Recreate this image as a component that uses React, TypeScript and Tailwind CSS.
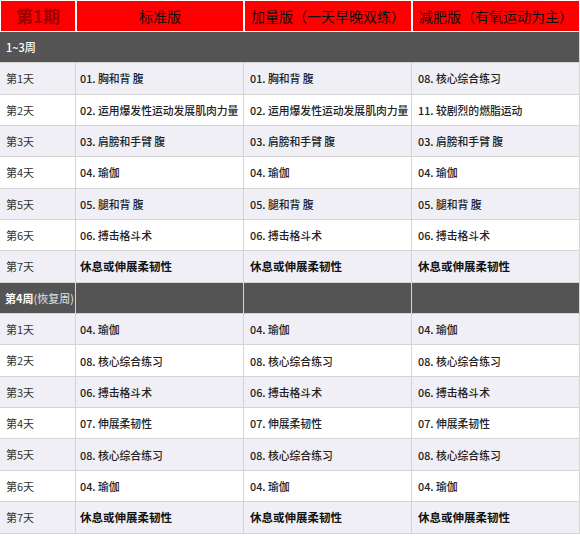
import React from "react";

const font = { fontFamily: '"Noto Sans CJK SC", "Liberation Sans", sans-serif' };

const block1 = [
  ["01. 胸和背 腹", "01. 胸和背 腹", "08. 核心综合练习"],
  ["02. 运用爆发性运动发展肌肉力量", "02. 运用爆发性运动发展肌肉力量", "11. 较剧烈的燃脂运动"],
  ["03. 肩膀和手臂 腹", "03. 肩膀和手臂 腹", "03. 肩膀和手臂 腹"],
  ["04. 瑜伽", "04. 瑜伽", "04. 瑜伽"],
  ["05. 腿和背 腹", "05. 腿和背 腹", "05. 腿和背 腹"],
  ["06. 搏击格斗术", "06. 搏击格斗术", "06. 搏击格斗术"],
  ["休息或伸展柔韧性", "休息或伸展柔韧性", "休息或伸展柔韧性"],
];

const block2 = [
  ["04. 瑜伽", "04. 瑜伽", "04. 瑜伽"],
  ["08. 核心综合练习", "08. 核心综合练习", "08. 核心综合练习"],
  ["06. 搏击格斗术", "06. 搏击格斗术", "06. 搏击格斗术"],
  ["07. 伸展柔韧性", "07. 伸展柔韧性", "07. 伸展柔韧性"],
  ["08. 核心综合练习", "08. 核心综合练习", "08. 核心综合练习"],
  ["04. 瑜伽", "04. 瑜伽", "04. 瑜伽"],
  ["休息或伸展柔韧性", "休息或伸展柔韧性", "休息或伸展柔韧性"],
];

function DayRows({ rows }: { rows: string[][] }) {
  return (
    <>
      {rows.map((r, i) => {
        const bg = i % 2 === 0 ? "bg-[#efeff5]" : "bg-white";
        const last = i === 6;
        const txt = last
          ? "text-[11.5px] font-bold text-[#111]"
          : "text-[10.8px] font-medium text-[#222]";
        return (
          <React.Fragment key={i}>
            <div className={`${bg} flex items-center border-r border-b border-[#d4d4d4] pl-[6px] text-[11px] text-[#333]`}>
              第{i + 1}天
            </div>
            <div className={`${bg} flex items-center border-r border-b border-[#d4d4d4] pl-[4px] whitespace-nowrap ${txt}`}>
              {r[0]}
            </div>
            <div className={`${bg} flex items-center border-r border-b border-[#d4d4d4] pl-[6px] whitespace-nowrap ${txt}`}>
              {r[1]}
            </div>
            <div className={`${bg} flex items-center border-r border-b border-[#d4d4d4] pl-[6px] whitespace-nowrap ${txt}`}>
              {r[2]}
            </div>
          </React.Fragment>
        );
      })}
    </>
  );
}

export default function App() {
  return (
    <div className="w-[580px] h-[536px] bg-white overflow-hidden" style={font}>
      <div className="grid grid-cols-[76px_168px_168px_168px] h-[32px]">
        <div className="border border-white bg-[#ff0000] flex items-center justify-center text-[17px] font-bold text-[#9a0000]">
          第1期
        </div>
        <div className="border border-white bg-[#ff0000] flex items-center justify-center text-[14px] text-[#111]">
          标准版
        </div>
        <div className="border border-white bg-[#ff0000] flex items-center justify-center text-[14px] text-[#111]">
          加量版（一天早晚双练）
        </div>
        <div className="border border-white bg-[#ff0000] flex items-center justify-center text-[14px] text-[#111]">
          减肥版（有氧运动为主）
        </div>
      </div>
      <div className="grid grid-cols-[76px_168px_168px_168px] auto-rows-[31.35px]">
        <div className="col-span-4 bg-[#545454] border-r border-b border-[#d4d4d4] flex items-center pl-[6px] text-[11px] font-medium text-white">
          1~3周
        </div>
        <DayRows rows={block1} />
        <div className="bg-[#545454] border-r border-b border-[#d4d4d4] flex items-center pl-[5px] text-white whitespace-nowrap">
          <span className="text-[11px] font-bold">第4周</span>
          <span className="text-[11px] text-[#e4e4e4]">(恢复周)</span>
        </div>
        <div className="bg-[#545454] border-r border-b border-[#d4d4d4]" />
        <div className="bg-[#545454] border-r border-b border-[#d4d4d4]" />
        <div className="bg-[#545454] border-r border-b border-[#d4d4d4]" />
        <DayRows rows={block2} />
      </div>
    </div>
  );
}
